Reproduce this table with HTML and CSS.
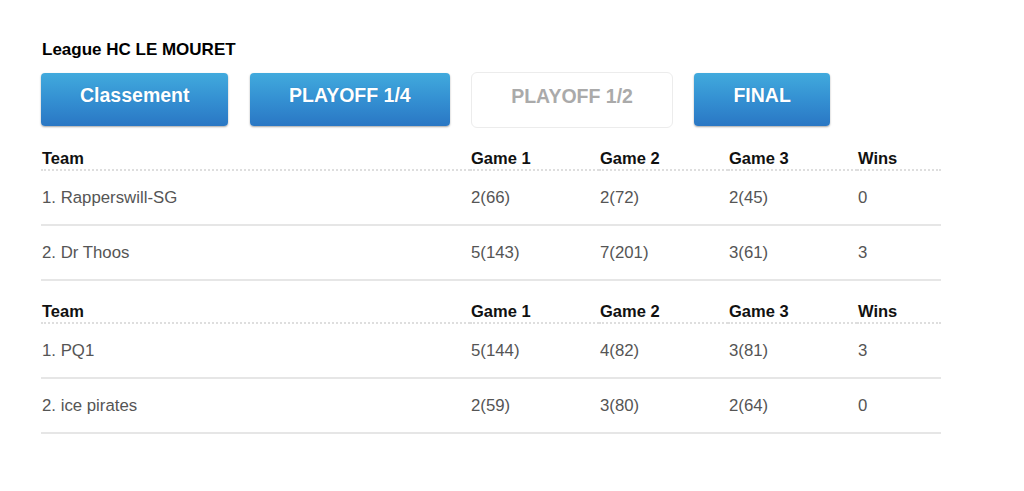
FILE: index.html
```html
<!DOCTYPE html>
<html lang="fr">
<head>
<meta charset="utf-8">
<title>League HC LE MOURET</title>
<link rel="stylesheet" href="styles.css">
</head>
<body>
<div class="page">
  <div class="league-title">League HC LE MOURET</div>
  <div class="tabs">
    <a class="tab tab-blue" href="#">Classement</a>
    <a class="tab tab-blue" href="#">PLAYOFF 1/4</a>
    <a class="tab tab-active" href="#">PLAYOFF 1/2</a>
    <a class="tab tab-blue" href="#">FINAL</a>
  </div>
  <table class="results">
    <colgroup>
      <col class="c-team"><col class="c-game"><col class="c-game"><col class="c-game"><col class="c-wins">
    </colgroup>
    <thead>
      <tr><th>Team</th><th>Game 1</th><th>Game 2</th><th>Game 3</th><th>Wins</th></tr>
    </thead>
    <tbody>
      <tr><td>1. Rapperswill-SG</td><td>2(66)</td><td>2(72)</td><td>2(45)</td><td>0</td></tr>
      <tr><td>2. Dr Thoos</td><td>5(143)</td><td>7(201)</td><td>3(61)</td><td>3</td></tr>
    </tbody>
  </table>
  <table class="results">
    <colgroup>
      <col class="c-team"><col class="c-game"><col class="c-game"><col class="c-game"><col class="c-wins">
    </colgroup>
    <thead>
      <tr><th>Team</th><th>Game 1</th><th>Game 2</th><th>Game 3</th><th>Wins</th></tr>
    </thead>
    <tbody>
      <tr><td>1. PQ1</td><td>5(144)</td><td>4(82)</td><td>3(81)</td><td>3</td></tr>
      <tr><td>2. ice pirates</td><td>2(59)</td><td>3(80)</td><td>2(64)</td><td>0</td></tr>
    </tbody>
  </table>
</div>
</body>
</html>
```

FILE: styles.css
```css
html, body {
  margin: 0;
  padding: 0;
  background: #ffffff;
}

body {
  font-family: "Liberation Sans", Arial, Helvetica, sans-serif;
  color: #111;
}

.page {
  padding: 40px 0 0 41px;
}

.league-title {
  font-size: 17px;
  font-weight: bold;
  line-height: 20px;
  color: #000;
  padding-left: 1px;
}

.tabs {
  display: flex;
  align-items: flex-start;
  gap: 21.5px;
  margin-top: 13px;
}

.tab {
  display: block;
  box-sizing: border-box;
  height: 53px;
  padding: 10px 39px 0;
  font-size: 19.5px;
  font-weight: bold;
  line-height: 24px;
  text-decoration: none;
  text-align: center;
  border-radius: 4px;
  white-space: nowrap;
}

.tab-blue {
  color: #ffffff;
  background: linear-gradient(to bottom, #41aadd 0%, #3490d2 50%, #2a77c4 100%);
  box-shadow: 0 1px 2px rgba(0, 0, 0, 0.35);
  text-shadow: 0 0 1px rgba(0, 60, 120, 0.25);
}

.tab-active {
  height: 56px;
  padding-top: 11px;
  color: #aaaaaa;
  background: #ffffff;
  border: 1px solid #ececec;
  border-radius: 6px;
  margin-top: -1px;
}

.results {
  width: 900px;
  border-collapse: collapse;
  table-layout: fixed;
}

.c-team { width: 429px; }
.c-game { width: 129px; }
.c-wins { width: 84px; }

.results th {
  text-align: left;
  font-size: 16.5px;
  font-weight: bold;
  line-height: 18px;
  color: #111;
  padding: 21px 0 2px 1px;
  border-bottom: 2px dotted #dedede;
  vertical-align: bottom;
}

.results td {
  font-size: 16.8px;
  line-height: 20px;
  color: #555;
  height: 53px;
  padding: 0 0 0 1px;
  border-bottom: 2px solid #e6e6e6;
  vertical-align: middle;
}
```
